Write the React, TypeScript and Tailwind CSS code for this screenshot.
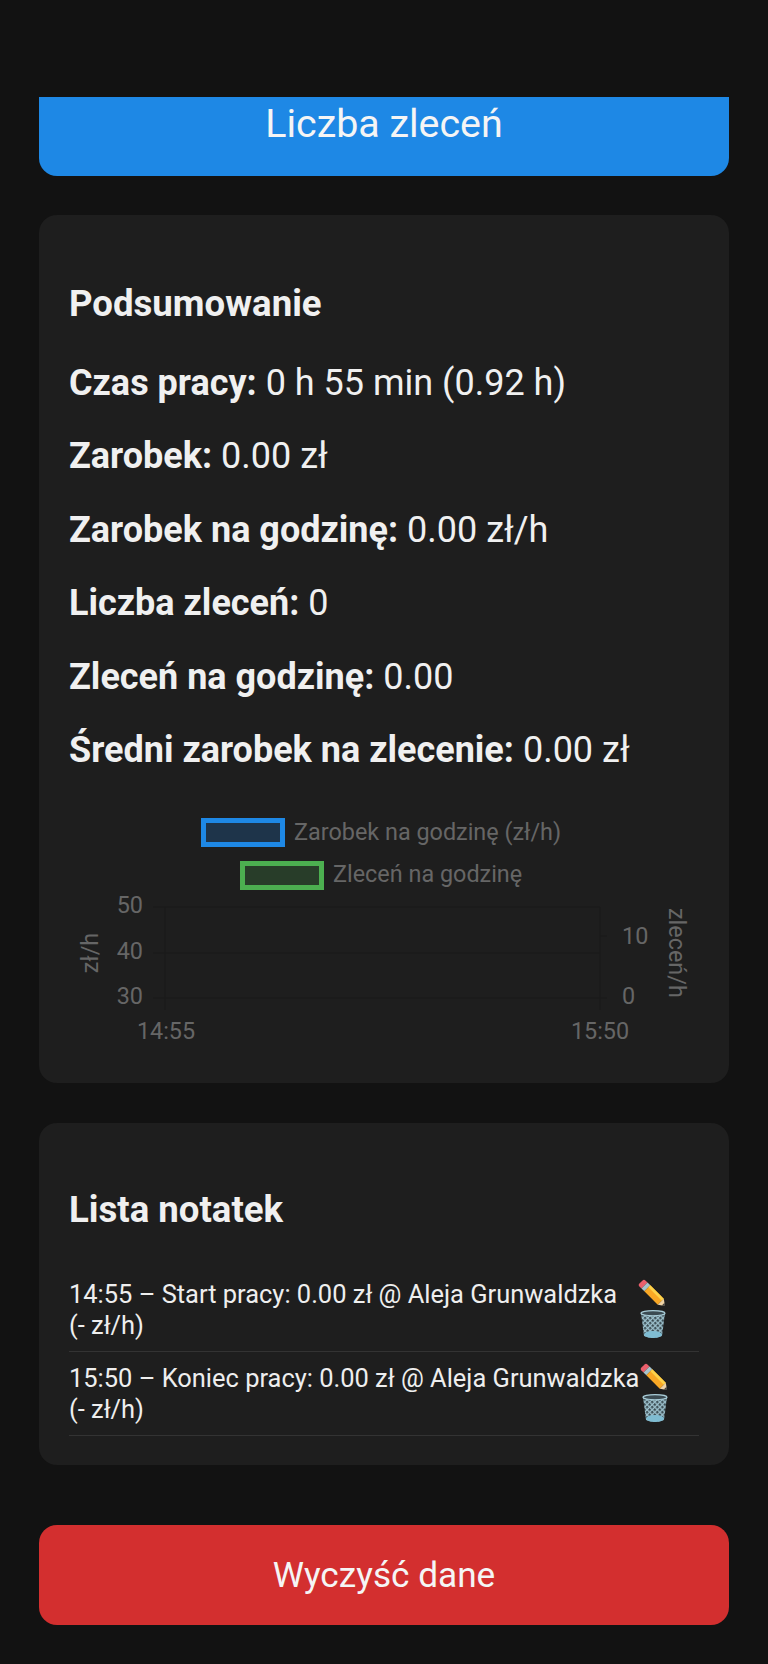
import type { ReactNode } from "react";

const stats = [
  { label: "Czas pracy:", value: "0 h 55 min (0.92 h)" },
  { label: "Zarobek:", value: "0.00 zł" },
  { label: "Zarobek na godzinę:", value: "0.00 zł/h" },
  { label: "Liczba zleceń:", value: "0" },
  { label: "Zleceń na godzinę:", value: "0.00" },
  { label: "Średni zarobek na zlecenie:", value: "0.00 zł" },
];

const notes = [
  { text: "14:55 – Start pracy: 0.00 zł @ Aleja Grunwaldzka", width: "w-[569px]" },
  { text: "15:50 – Koniec pracy: 0.00 zł @ Aleja Grunwaldzka", width: "w-[571px]" },
];

function PencilIcon() {
  return (
    <svg width="30" height="30" viewBox="0 0 30 30" className="block">
      <g transform="translate(15 15) rotate(45) translate(-17 -4.25)">
        <path d="M5 0 H2 Q0 0 0 2 V6.5 Q0 8.5 2 8.5 H5 Z" fill="#ea5f6c" />
        <rect x="5" width="4" height="8.5" fill="#a8c3cb" />
        <rect x="9" width="19" height="8.5" fill="#f9a825" />
        <rect x="9" y="0" width="19" height="2.8" fill="#fdd24a" />
        <path d="M28 0 L34 4.25 L28 8.5 Z" fill="#efd3a6" />
        <path d="M31.4 2.4 L34 4.25 L31.4 6.1 Z" fill="#3a3a3a" />
      </g>
    </svg>
  );
}

function TrashIcon() {
  return (
    <svg width="26" height="29" viewBox="0 0 26 29" className="block">
      <defs>
        <pattern id="mesh" width="3.6" height="3.6" patternUnits="userSpaceOnUse" patternTransform="rotate(45)">
          <rect width="3.6" height="3.6" fill="#9cc0cc" />
          <rect x="1" y="1" width="2.2" height="2.2" fill="#34444a" />
        </pattern>
      </defs>
      <path d="M1 3 H25 L22 26 Q13 30 4 26 Z" fill="url(#mesh)" />
      <ellipse cx="13" cy="3.2" rx="12" ry="2.6" fill="#3b4b52" stroke="#a9cdd8" strokeWidth="1.2" />
      <ellipse cx="13" cy="24.5" rx="9" ry="3.6" fill="#7fbcd2" />
    </svg>
  );
}

function Card({ className, children }: { className: string; children: ReactNode }) {
  return <section className={`bg-[#1e1e1e] rounded-[18px] px-[30px] ${className}`}>{children}</section>;
}

function Chart() {
  const axisText = "#666666";
  const grid = "#1b1b1b";
  return (
    <svg width="630" height="236" viewBox="0 0 630 236" className="block mt-[25px]">
      <g fontFamily="Roboto, sans-serif" fontSize="23.4" fill={axisText}>
        {/* legend */}
        <rect x="134.5" y="8.5" width="79" height="24" fill="#1e344a" stroke="#1e88e5" strokeWidth="5" />
        <text x="225" y="28">Zarobek na godzinę (zł/h)</text>
        <rect x="173.5" y="51.5" width="79" height="24" fill="#283d29" stroke="#4caf50" strokeWidth="5" />
        <text x="264" y="70">Zleceń na godzinę</text>

        {/* grid */}
        <g stroke={grid} strokeWidth="1.5" fill="none">
          <path d="M84 95 H531 M84 141 H531 M84 186 H538" />
          <path d="M96 95 V198 M531 95 V198" />
          <path d="M531 124 H538" />
        </g>

        {/* y left */}
        <text x="74" y="101" textAnchor="end">50</text>
        <text x="74" y="147" textAnchor="end">40</text>
        <text x="74" y="192" textAnchor="end">30</text>
        <text transform="translate(29 141) rotate(-90)" textAnchor="middle">zł/h</text>

        {/* y right */}
        <text x="553" y="132">10</text>
        <text x="553" y="192">0</text>
        <text transform="translate(600 96) rotate(90)">zleceń/h</text>

        {/* x */}
        <text x="97" y="227" textAnchor="middle">14:55</text>
        <text x="531" y="227" textAnchor="middle">15:50</text>
      </g>
    </svg>
  );
}

export default function App() {
  return (
    <div className="min-h-[1664px] bg-[#121212] px-[39px] pt-[97px] text-white font-['Roboto',sans-serif]">
      <button
        type="button"
        className="w-full h-[79px] bg-[#1e88e5] rounded-b-[18px] text-[39.4px] leading-[54px] flex justify-center items-start text-[#f5f5f5]"
      >
        Liczba zleceń
      </button>

      <Card className="mt-[39px] pt-[67px] pb-[35px]">
        <h2 className="text-[36.6px] leading-[44px] font-bold text-[#f0f0f0]">Podsumowanie</h2>
        <div className="mt-[21px]">
          {stats.map((s) => (
            <p key={s.label} className="text-[36px] leading-[73.4px] text-[#f0f0f0]">
              <strong className="font-bold">{s.label}</strong> {s.value}
            </p>
          ))}
        </div>
        <Chart />
      </Card>

      <Card className="mt-[40px] pt-[65px] pb-[29px]">
        <h2 className="text-[36.6px] leading-[44px] font-bold text-[#f0f0f0]">Lista notatek</h2>
        <ul className="mt-[36px]">
          {notes.map((n) => (
            <li key={n.text} className="flex items-start border-b border-[#333333] h-[84px] pt-[11px]">
              <span className={`${n.width} shrink-0 whitespace-nowrap text-[25.45px] leading-[30.7px] text-[#eeeeee]`}>
                {n.text}
                <br />
                (- zł/h)
              </span>
              <span className="flex flex-col items-center gap-[1px]">
                <PencilIcon />
                <TrashIcon />
              </span>
            </li>
          ))}
        </ul>
      </Card>

      <button
        type="button"
        className="mt-[60px] w-full h-[100px] bg-[#d32f2f] rounded-[18px] text-[35.2px] text-[#f5f5f5] flex items-center justify-center"
      >
        Wyczyść dane
      </button>
    </div>
  );
}
